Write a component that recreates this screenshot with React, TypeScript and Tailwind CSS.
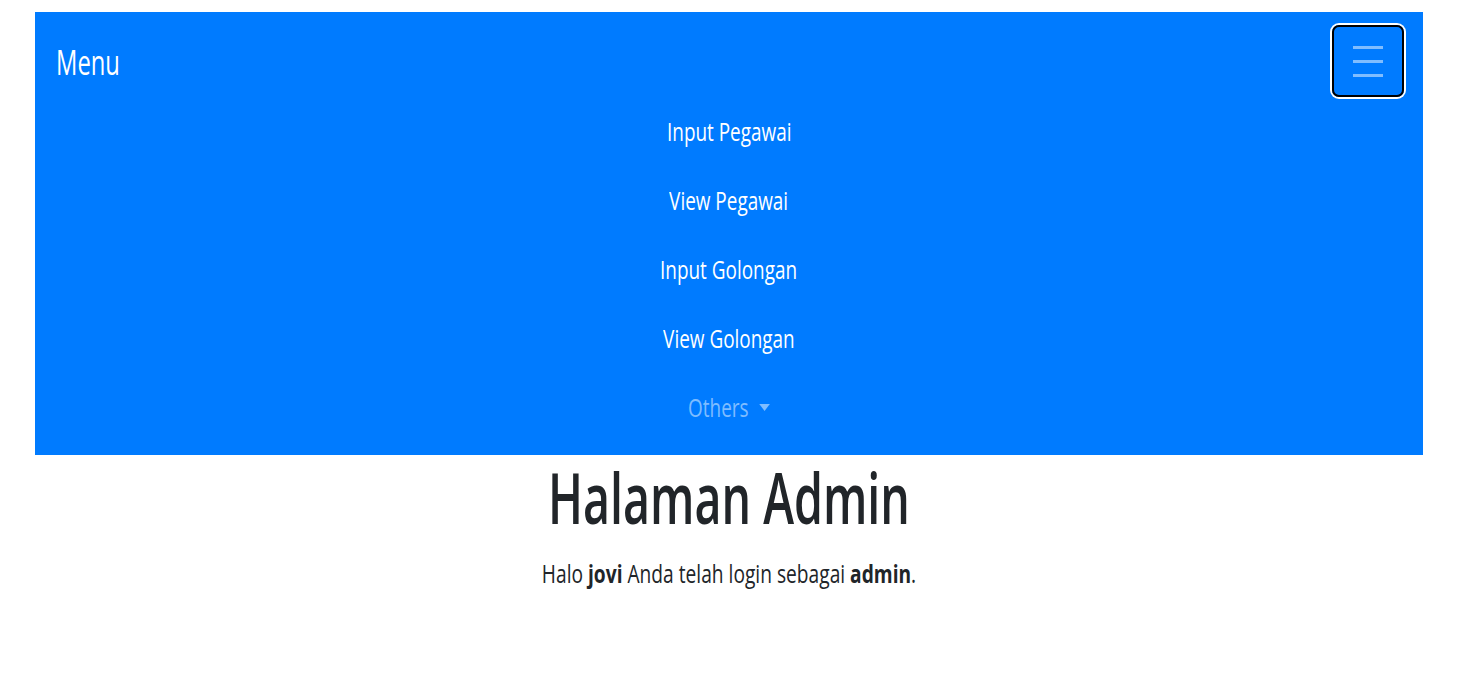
import React from "react";

const font = { fontFamily: '"Open Sans", "Noto Sans", sans-serif' };

export default function App() {
  const items = ["Input Pegawai", "View Pegawai", "Input Golongan", "View Golongan"];
  return (
    <div className="w-[1468px] h-[700px] bg-white pt-[12px] pl-[35px] pr-[45px]" style={font}>
      <nav className="bg-[#007bff] pt-[13px] pb-[13px]">
        <div className="h-[72px] flex items-center justify-between pl-[21px] pr-[19px]">
          <span className="inline-block text-white text-[35px] leading-none origin-left scale-x-[0.68]">Menu</span>
          <button className="w-[72px] h-[72px] rounded-[7px] border-2 border-black ring-2 ring-white flex flex-col items-center justify-center gap-[11px]">
            <span className="block w-[30px] h-[3px] bg-white/50" />
            <span className="block w-[30px] h-[3px] bg-white/50" />
            <span className="block w-[30px] h-[3px] bg-white/50" />
          </button>
        </div>
        <ul>
          {items.map((t) => (
            <li key={t} className="h-[69px] flex items-center justify-center">
              <span className="inline-block text-white text-[25px] leading-none scale-x-[0.757]">{t}</span>
            </li>
          ))}
          <li className="h-[69px] flex items-center justify-center">
            <span className="inline-flex items-center gap-[14px] text-white/50 text-[25px] leading-none scale-x-[0.757]">
              Others
              <span className="block w-0 h-0 border-l-[7px] border-r-[7px] border-t-[7px] border-l-transparent border-r-transparent border-t-white/50" />
            </span>
          </li>
        </ul>
      </nav>
      <div className="flex flex-col items-center">
        <h1 className="mt-[7px] h-[70px] flex items-center">
          <span className="inline-block text-[#212529] text-[70px] leading-none font-semibold scale-x-[0.665]">Halaman Admin</span>
        </h1>
        <p className="mt-[29px]">
          <span className="inline-block text-[#212529] text-[25px] leading-none scale-x-[0.767]">
            Halo <b>jovi</b> Anda telah login sebagai <b>admin</b>.
          </span>
        </p>
      </div>
    </div>
  );
}
